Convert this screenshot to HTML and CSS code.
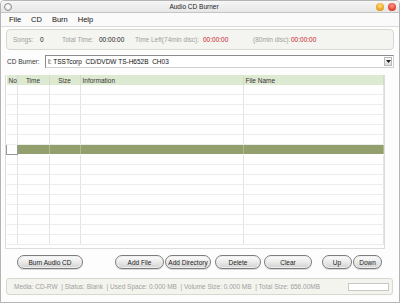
FILE: index.html
```html
<!DOCTYPE html>
<html lang="en">
<head>
    <meta charset="UTF-8">
    <title>Audio CD Burner</title>
    <link rel="stylesheet" href="styles.css">
</head>
<body>
<div class="window">
    <div class="titlebar">
        <span class="dot dot-menu"></span>
        <span class="title">Audio CD Burner</span>
        <span class="dot dot-min"></span>
        <span class="dot dot-close"></span>
    </div>

    <ul class="menubar">
        <li>File</li>
        <li>CD</li>
        <li>Burn</li>
        <li>Help</li>
    </ul>

    <div class="info">
        <span class="lbl">Songs:</span><span class="val">0</span>
        <span class="lbl">Total Time:</span><span class="val">00:00:00</span>
        <span class="lbl">Time Left(74min disc):</span><span class="val red">00:00:00</span>
        <span class="lbl">(80min disc):</span><span class="val red">00:00:00</span>
    </div>

    <div class="burner">
        <label>CD Burner:</label>
        <div class="select">
            <span>I: TSSTcorp&nbsp; CD/DVDW TS-H652B&nbsp; CH03</span>
            <span class="arrow"><svg width="5" height="3" viewBox="0 0 5 3"><path d="M0 0h5L2.5 3z" fill="#222"/></svg></span>
        </div>
    </div>

    <div class="tracks">
        <table>
            <thead>
                <tr><th class="c-no">No</th><th class="c-time">Time</th><th class="c-size">Size</th><th class="c-info">Information</th><th>File Name</th></tr>
            </thead>
            <tbody id="rows"></tbody>
        </table>
    </div>

    <div class="buttons">
        <button class="b-burn">Burn Audio CD</button>
        <button class="b-add">Add File</button>
        <button class="b-dir">Add Directory</button>
        <button class="b-del">Delete</button>
        <button class="b-clear">Clear</button>
        <button class="b-up">Up</button>
        <button class="b-down">Down</button>
    </div>

    <div class="status">
        <span>Media: CD-RW&nbsp; | Status: Blank&nbsp; | Used Space: 0.000 MB&nbsp; | Volume Size: 0.000 MB&nbsp; | Total Size: 656.00MB</span>
        <span class="progress"></span>
    </div>
</div>

<script>
    var body = document.getElementById('rows');
    for (var i = 0; i < 16; i++) {
        var tr = document.createElement('tr');
        if (i === 6) tr.className = 'selected';
        tr.innerHTML = '<td></td><td></td><td></td><td></td><td></td>';
        body.appendChild(tr);
    }
</script>
</body>
</html>
```

FILE: styles.css
```css
/* General */
body {
    margin: 0;
    background: #ffffff;
    font-family: 'Liberation Sans', Arial, sans-serif;
    font-size: 6.5px;
    color: #333;
}

.window {
    width: 398px;
    height: 301px;
    border: 1px solid #b4b4b4;
    border-radius: 4px 4px 0 0;
    background: #fdfdfd;
    display: flex;
    flex-direction: column;
    overflow: hidden;
}

/* Title bar */
.titlebar {
    height: 11px;
    background: linear-gradient(#f6f6f6, #e6e6e6);
    border-bottom: 1px solid #c4c4c4;
    display: flex;
    align-items: center;
    padding: 0 3px;
}

.title {
    flex: 1;
    text-align: center;
    font-size: 6.5px;
    color: #222;
}

.dot {
    width: 8px;
    height: 8px;
    border-radius: 50%;
    box-sizing: border-box;
}

.dot-menu {
    border: 1px solid #8a8a8a;
    background: radial-gradient(circle at 50% 40%, #fff, #ddd);
}

.dot-min {
    background: radial-gradient(circle at 50% 35%, #ffe27a, #e79a18 70%, #b46a10);
    margin-right: 4px;
}

.dot-close {
    background: radial-gradient(circle at 50% 35%, #ff9a8a, #e03828 70%, #a01810);
}

/* Menu */
.menubar {
    list-style: none;
    margin: 0;
    padding: 0 0 0 8px;
    height: 13px;
    display: flex;
    align-items: center;
    gap: 10px;
    font-size: 7.5px;
    color: #111;
    background: #fafafa;
    border-bottom: 1px solid #dcdcdc;
}

/* Info box */
.info {
    margin: 2px 5px 0 5px;
    height: 19px;
    border: 1px solid #d8d8d0;
    border-radius: 4px;
    background: #f4f4f0;
    display: grid;
    grid-template-columns: 27px 22px 37px 36px 68px 50px 38px 1fr;
    align-items: center;
    padding-left: 6px;
}

.lbl {
    color: #a0a0a0;
}

.val {
    color: #222;
}

.red {
    color: #c8202a;
}

/* CD burner */
.burner {
    display: flex;
    align-items: center;
    margin: 5px 5px 0 6px;
    height: 13px;
}

.burner label {
    width: 38px;
}

.select {
    flex: 1;
    height: 11px;
    border: 1px solid #8c8c8c;
    border-right-color: #d0d0d0;
    border-bottom-color: #d0d0d0;
    background: #fff;
    display: flex;
    align-items: center;
    padding-left: 2px;
    color: #111;
}

.select span:first-child {
    flex: 1;
}

.arrow {
    width: 8px;
    height: 9px;
    margin-right: 1px;
    border: 1px solid #b8b8b8;
    background: linear-gradient(#fafafa, #dedede);
    display: flex;
    align-items: center;
    justify-content: center;
    box-sizing: border-box;
}

/* Track list */
.tracks {
    margin: 7px 14px 0 4px;
    height: 173px;
    border: 1px solid #dcdcdc;
    border-top: none;
    overflow: hidden;
    background: #fff;
}

table {
    width: 100%;
    border-collapse: collapse;
    table-layout: fixed;
}

th {
    height: 10px;
    background: #dee9d2;
    font-weight: normal;
    text-align: left;
    padding: 0;
    text-indent: 2px;
    color: #333;
    border-right: 1px solid #d0dcc4;
}

.c-no { width: 10px; }
.c-time { width: 31px; text-align: center; text-indent: 0; }
.c-size { width: 30px; text-align: center; text-indent: 0; }
.c-info { width: 162px; }

td {
    height: 9px;
    padding: 0;
    border-bottom: 1px solid #ececec;
    border-right: 1px solid #e4e4e4;
}

tr.selected td {
    background: #939f6c;
    border-right-color: #b0b98e;
    border-bottom-color: #fff;
}

tr.selected td:first-child {
    background: #fff;
    border: 1px solid #999;
}

/* Buttons */
.buttons {
    display: flex;
    margin: 6px 0 0 16px;
    height: 14px;
}

button {
    height: 14px;
    padding: 0;
    border: 1px solid #7c7c7c;
    border-radius: 7px;
    background: linear-gradient(#fdfdfd, #e8e8e8 55%, #cfcfcf);
    box-shadow: inset 0 0 0 1px #f0f0f0, 0 1px 0 #d8d8d8;
    font-family: inherit;
    font-size: 6.5px;
    color: #222;
}

.b-burn { width: 66px; }
.b-add { width: 49px; margin-left: 32px; }
.b-dir { width: 46px; margin-left: 1px; }
.b-del { width: 46px; margin-left: 4px; }
.b-clear { width: 48px; margin-left: 3px; }
.b-up { width: 30px; margin-left: 10px; }
.b-down { width: 29px; margin-left: 1px; }

/* Status bar */
.status {
    margin: 9px 6px 0 5px;
    height: 15px;
    border: 1px solid #d8d8d0;
    border-radius: 3px;
    background: #f4f4ee;
    display: flex;
    align-items: center;
    padding-left: 7px;
    color: #a0a0a0;
}

.status span:first-child {
    flex: 1;
}

.progress {
    width: 39px;
    height: 6px;
    border: 1px solid #c8c8c8;
    background: #fff;
    margin-right: 3px;
}
```
